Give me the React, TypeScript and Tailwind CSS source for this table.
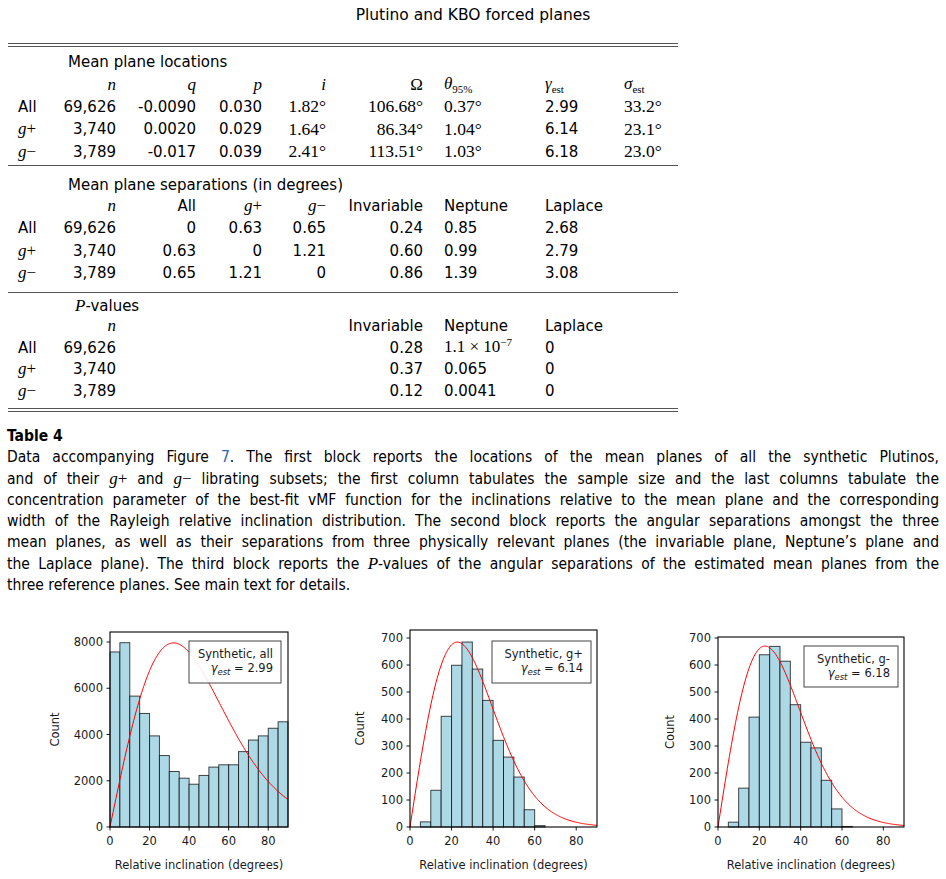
import React from 'react';

const SANS = "font-['DejaVu_Sans',sans-serif]";
const SERIF = "font-['Liberation_Serif','DejaVu_Serif',serif]";
const CAPTION = "font-['DejaVu_Sans_Condensed','DejaVu_Sans',sans-serif] font-stretch-condensed";

function I({ children }: { children: React.ReactNode }) {
	return <span className={`${SERIF} text-[17px] italic`}>{children}</span>;
}

function Deg({ v }: { v: string }) {
	return <span className={`${SERIF} text-[17.5px]`}>{v}°</span>;
}

function G({ sign }: { sign: '+' | '−' }) {
	return (
		<span className={`${SERIF} text-[17px]`}>
			<i>g</i>
			{sign}
		</span>
	);
}

function Sub({ sym, sub }: { sym: string; sub: string }) {
	return (
		<span className={`${SERIF} text-[17px]`}>
			<i>{sym}</i>
			<span className="relative top-[4px] text-[11px]">{sub}</span>
		</span>
	);
}

const ALIGN = ['pl-[10px]', 'text-right', 'text-right', 'text-right', 'text-right', 'text-right', 'pl-[21px]', '', ''];

function Row({ cells, h }: { cells: React.ReactNode[]; h: string }) {
	return (
		<div className={`grid grid-cols-[52px_56px_80px_66px_64px_97px_122px_79px_54px] items-center overflow-visible ${h}`}>
			{ALIGN.map((a, i) => (
				<div key={i} className={`whitespace-nowrap ${a}`}>
					{cells[i] ?? ''}
				</div>
			))}
		</div>
	);
}

type ChartProps = {
	counts: number[];
	k: number;
	L: number;
	R: number;
	T: number;
	B: number;
	yTicks: number[];
	gamma: number;
	peak: number;
	name: string;
	val: string;
	box: { x: number; y: number; w: number; h: number };
};

function Chart({ counts, k, L, R, T, B, yTicks, gamma, peak, name, val, box }: ChartProps) {
	const sx = (v: number) => L + (v / 90) * (R - L);
	const sy = (c: number) => B - c * k;
	const fn = (d: number) => {
		const r = (d * Math.PI) / 180;
		return Math.sin(r) * Math.exp(gamma * Math.cos(r));
	};
	let fmax = 0;
	for (let d = 0; d <= 90; d += 0.1) fmax = Math.max(fmax, fn(d));
	const pts: string[] = [];
	for (let d = 0; d <= 90.001; d += 0.5) pts.push(`${sx(d).toFixed(2)},${sy((fn(d) / fmax) * peak).toFixed(2)}`);
	const bw = sx(5) - sx(0);
	const right = box.x + box.w - 8;

	return (
		<svg width="262" height="254" className="block shrink-0" fontFamily="DejaVu Sans, sans-serif" fontSize="11.5" fill="#1a1a1a">
			{counts.map((c, j) =>
				c > 0 ? (
					<rect
						key={j}
						x={sx(j * 5)}
						y={sy(c)}
						width={bw}
						height={c * k}
						fill="#add8e6"
						stroke="#000"
						strokeOpacity="0.72"
						strokeWidth="1"
					/>
				) : null
			)}
			<polyline points={pts.join(' ')} fill="none" stroke="#ff0000" strokeWidth="1" />
			<rect x={L} y={T} width={R - L} height={B - T} fill="none" stroke="#000" strokeWidth="1.1" />
			{yTicks.map((t) => (
				<g key={t}>
					<line x1={L - 3.5} x2={L} y1={sy(t)} y2={sy(t)} stroke="#000" strokeWidth="0.9" />
					<text x={L - 7} y={sy(t)} dy="0.36em" textAnchor="end">
						{t}
					</text>
				</g>
			))}
			{[0, 20, 40, 60, 80].map((t) => (
				<g key={t}>
					<line x1={sx(t)} x2={sx(t)} y1={B} y2={B + 3.5} stroke="#000" strokeWidth="0.9" />
					<text x={sx(t)} y={B + 18} textAnchor="middle">
						{t}
					</text>
				</g>
			))}
			<text x={(L + R) / 2} y={B + 42} textAnchor="middle">
				Relative inclination (degrees)
			</text>
			<text x={15} y={(T + B) / 2} textAnchor="middle" dominantBaseline="central" transform={`rotate(-90 15 ${(T + B) / 2})`}>
				Count
			</text>
			<rect x={box.x} y={box.y} width={box.w} height={box.h} fill="#fff" fillOpacity="0.9" stroke="#444" strokeWidth="1" />
			<text x={right} y={box.y + 17} textAnchor="end">
				{name}
			</text>
			<text x={right} y={box.y + 31} textAnchor="end">
				<tspan fontStyle="italic">γ</tspan>
				<tspan fontStyle="italic" fontSize="8.5" dy="2.5">
					est
				</tspan>
				<tspan dy="-2.5"> = {val}</tspan>
			</text>
		</svg>
	);
}

const CAPTION_LINES: React.ReactNode[] = [
	<>
		Data accompanying Figure <span className="text-[#2f5fb3]">7</span>. The first block reports the locations of the mean planes of all the synthetic Plutinos,
	</>,
	<>
		and of their <G sign="+" /> and <G sign="−" /> librating subsets; the first column tabulates the sample size and the last columns tabulate the
	</>,
	<>concentration parameter of the best-fit vMF function for the inclinations relative to the mean plane and the corresponding</>,
	<>width of the Rayleigh relative inclination distribution. The second block reports the angular separations amongst the three</>,
	<>mean planes, as well as their separations from three physically relevant planes (the invariable plane, Neptune’s plane and</>,
	<>
		the Laplace plane). The third block reports the <I>P</I>-values of the angular separations of the estimated mean planes from the
	</>
];

export default function App() {
	return (
		<div className={`h-[879px] w-[946px] overflow-hidden bg-white pt-[4px] text-black ${SANS}`}>
			<div className="h-[22px] text-center text-[15.5px] leading-[22px]">Plutino and KBO forced planes</div>

			<div className="ml-[8px] w-[670px] text-[15px] leading-[22px]">
				<div className="mt-[17px] h-[4px] border-y border-[#555]" />

				<div className="mt-[4px] h-[22px] pl-[60px]">Mean plane locations</div>
				<Row
					h="h-[22px]"
					cells={['', <I>n</I>, <I>q</I>, <I>p</I>, <I>i</I>, <span className={`${SERIF} text-[17px]`}>Ω</span>, <Sub sym="θ" sub="95%" />, <Sub sym="γ" sub="est" />, <Sub sym="σ" sub="est" />]}
				/>
				<Row h="h-[22.5px]" cells={['All', '69,626', '-0.0090', '0.030', <Deg v="1.82" />, <Deg v="106.68" />, <Deg v="0.37" />, '2.99', <Deg v="33.2" />]} />
				<Row h="h-[22.5px]" cells={[<G sign="+" />, '3,740', '0.0020', '0.029', <Deg v="1.64" />, <Deg v="86.34" />, <Deg v="1.04" />, '6.14', <Deg v="23.1" />]} />
				<Row h="h-[22.5px]" cells={[<G sign="−" />, '3,789', '-0.017', '0.039', <Deg v="2.41" />, <Deg v="113.51" />, <Deg v="1.03" />, '6.18', <Deg v="23.0" />]} />
				<div className="mt-[2.5px] border-t border-[#555]" />

				<div className="mt-[9px] h-[20px] pl-[60px] leading-[20px]">Mean plane separations (in degrees)</div>
				<Row h="h-[22px]" cells={['', <I>n</I>, 'All', <G sign="+" />, <G sign="−" />, 'Invariable', 'Neptune', 'Laplace']} />
				<Row h="h-[22.5px]" cells={['All', '69,626', '0', '0.63', '0.65', '0.24', '0.85', '2.68']} />
				<Row h="h-[22.5px]" cells={[<G sign="+" />, '3,740', '0.63', '0', '1.21', '0.60', '0.99', '2.79']} />
				<Row h="h-[22.5px]" cells={[<G sign="−" />, '3,789', '0.65', '1.21', '0', '0.86', '1.39', '3.08']} />
				<div className="mt-[7.5px] border-t border-[#555]" />

				<div className="mt-[4px] h-[18px] pl-[67px] leading-[18px]">
					<I>P</I>-values
				</div>
				<Row h="h-[18px]" cells={['', <I>n</I>, '', '', '', 'Invariable', 'Neptune', 'Laplace']} />
				<div className="mt-[3px]">
					<Row
						h="h-[22px]"
						cells={[
							'All',
							'69,626',
							'',
							'',
							'',
							'0.28',
							<span className={`${SERIF} text-[17px]`}>
								1.1 × 10<span className="relative -top-[6px] text-[11px]">−7</span>
							</span>,
							'0'
						]}
					/>
					<Row h="h-[22px]" cells={[<G sign="+" />, '3,740', '', '', '', '0.37', '0.065', '0']} />
					<Row h="h-[22px]" cells={[<G sign="−" />, '3,789', '', '', '', '0.12', '0.0041', '0']} />
				</div>
				<div className="mt-[6px] h-[4px] border-y border-[#555]" />
			</div>

			<div className={`mx-[7px] mt-[13.5px] text-[15.5px] leading-[21px] ${CAPTION}`}>
				<div className="font-bold">Table 4</div>
				{CAPTION_LINES.map((line, i) => (
					<div key={i} className="text-justify whitespace-nowrap [text-align-last:justify]">
						{line}
					</div>
				))}
				<div>three reference planes. See main text for details.</div>
			</div>

			<div className="mt-[29.5px] flex">
				<div className="ml-[40px]">
					<Chart
						counts={[7570, 7970, 5660, 4910, 3940, 3090, 2400, 2110, 1850, 2230, 2590, 2690, 2690, 3260, 3760, 3940, 4270, 4550]}
						k={0.023125}
						L={70}
						R={248}
						T={7}
						B={202}
						yTicks={[0, 2000, 4000, 6000, 8000]}
						gamma={2.99}
						peak={7960}
						name="Synthetic, all"
						val="2.99"
						box={{ x: 149, y: 16, w: 92, h: 42 }}
					/>
				</div>
				<div className="ml-[43px]">
					<Chart
						counts={[0, 19, 136, 410, 599, 685, 585, 469, 321, 259, 185, 64, 5, 0, 0, 0, 0, 0]}
						k={0.27}
						L={65}
						R={252}
						T={5}
						B={202}
						yTicks={[0, 100, 200, 300, 400, 500, 600, 700]}
						gamma={6.14}
						peak={685}
						name="Synthetic, g+"
						val="6.14"
						box={{ x: 147, y: 16, w: 99, h: 42 }}
					/>
				</div>
				<div className="ml-[48px]">
					<Chart
						counts={[0, 18, 144, 407, 638, 669, 614, 453, 314, 293, 173, 67, 2, 0, 0, 0, 0, 0]}
						k={0.27}
						L={63}
						R={249}
						T={12}
						B={202}
						yTicks={[0, 100, 200, 300, 400, 500, 600, 700]}
						gamma={6.18}
						peak={670}
						name="Synthetic, g-"
						val="6.18"
						box={{ x: 149, y: 21, w: 94, h: 41 }}
					/>
				</div>
			</div>
		</div>
	);
}
